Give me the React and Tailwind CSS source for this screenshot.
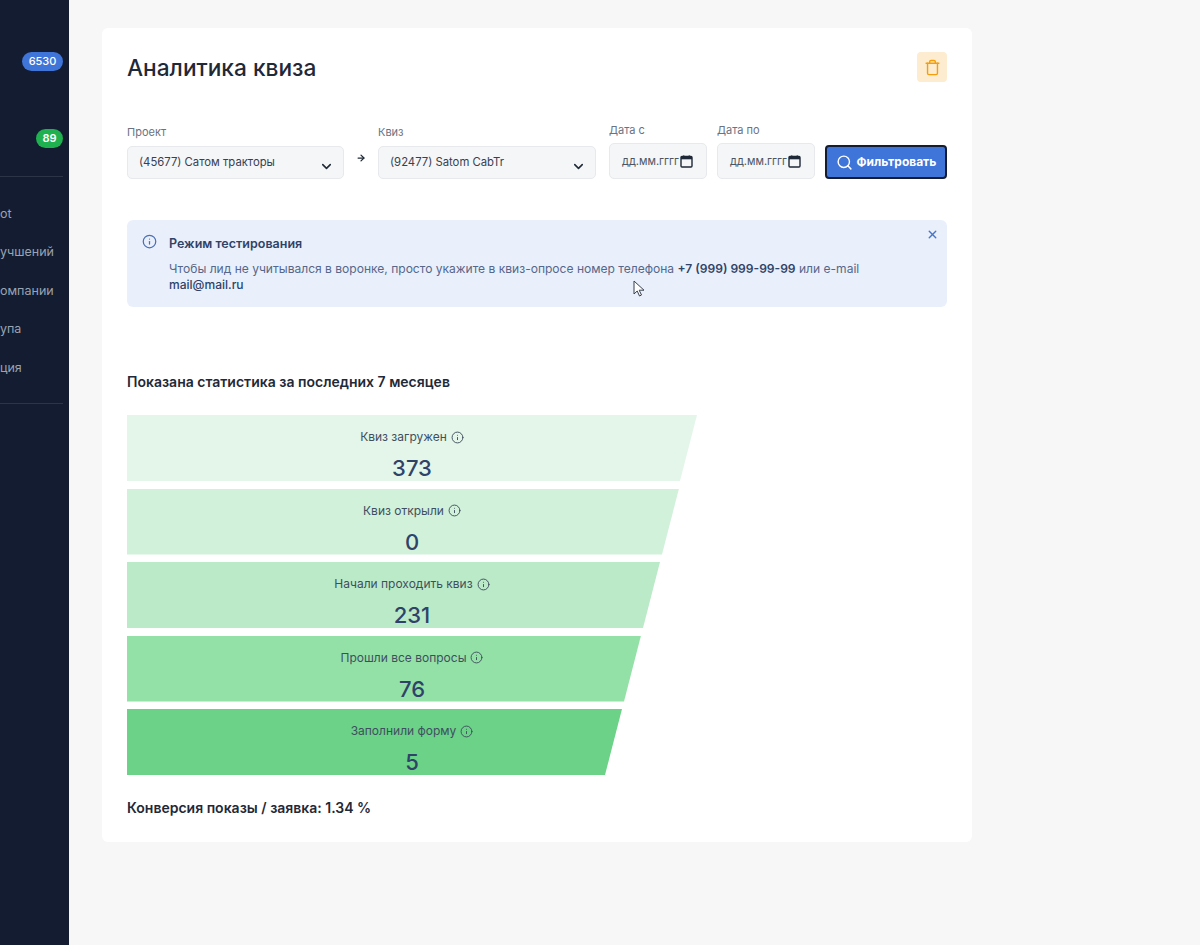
import React from 'react';
import { ChevronDown, ArrowRight, Search, X, Info, Trash } from 'lucide-react';

const funnel = [
  { label: 'Квиз загружен', value: '373', bg: 'bg-[#e4f6e9]', clip: '[clip-path:polygon(0_0,570px_0,553px_100%,0_100%)]' },
  { label: 'Квиз открыли', value: '0', bg: 'bg-[#d2f1da]', clip: '[clip-path:polygon(0_0,552px_0,535px_100%,0_100%)]' },
  { label: 'Начали проходить квиз', value: '231', bg: 'bg-[#bbeac8]', clip: '[clip-path:polygon(0_0,533px_0,516px_100%,0_100%)]' },
  { label: 'Прошли все вопросы', value: '76', bg: 'bg-[#94e1a8]', clip: '[clip-path:polygon(0_0,514px_0,497px_100%,0_100%)]' },
  { label: 'Заполнили форму', value: '5', bg: 'bg-[#6bd288]', clip: '[clip-path:polygon(0_0,495px_0,478px_100%,0_100%)]' },
];

const Sidebar = () => (
  <aside className="w-[69px] shrink-0 min-h-[945px] bg-[#131c31] overflow-hidden text-[12.5px] text-[#9aa3b2]">
    <div className="flex justify-end pt-[52px] pr-[6px]">
      <span className="h-[19px] w-[41px] rounded-full bg-[#3f74d8] text-white text-[11px] font-medium leading-[19px] text-center">6530</span>
    </div>
    <div className="flex justify-end pt-[58px] pr-[6px]">
      <span className="h-[19px] w-[27px] rounded-full bg-[#1fb14f] text-white text-[11px] font-semibold leading-[19px] text-center">89</span>
    </div>
    <div className="mt-[28px] mr-[6px] border-t border-[#2c3548]" />
    <div className="pt-[18px] leading-[38.4px]">
      <div>ot</div>
      <div>учшений</div>
      <div>омпании</div>
      <div>упа</div>
      <div>ция</div>
    </div>
    <div className="mt-[16px] mr-[6px] border-t border-[#2c3548]" />
  </aside>
);

const SelectBox = ({ label, value, width }) => (
  <div className={width}>
    <div className="text-[11px] leading-[14px] text-[#6b7280] mb-[7px]">{label}</div>
    <div className="h-[33px] pl-[11px] pr-[9px] flex items-center justify-between bg-[#f5f6f7] border border-[#e7e9ec] rounded-[5px] text-[11.3px] text-[#374151]">
      <span>{value}</span>
      <ChevronDown size={15} strokeWidth={2.5} className="mt-[7px] text-[#1f2937]" />
    </div>
  </div>
);

// calendar glyph of a native date input: thick top bar, thin frame
const CalendarGlyph = () => (
  <svg width="13" height="13" viewBox="0 0 13 13" className="text-[#1f2937] shrink-0">
    <rect x="1" y="1.5" width="11" height="10.5" rx="1" fill="none" stroke="currentColor" strokeWidth="1.4" />
    <rect x="1" y="1.5" width="11" height="2.8" fill="currentColor" />
    <rect x="3" y="0.5" width="1.4" height="2" fill="currentColor" />
    <rect x="8.6" y="0.5" width="1.4" height="2" fill="currentColor" />
  </svg>
);

const DateBox = ({ label }) => (
  <div className="w-[98px]">
    <div className="text-[11px] leading-[14px] text-[#6b7280] mb-[6px]">{label}</div>
    <div className="h-[36px] pl-[12px] pr-[13px] flex items-center justify-between bg-[#f5f6f7] border border-[#e7e9ec] rounded-[5px] text-[11px] text-[#4b5563]">
      <span>дд.мм.гггг</span>
      <CalendarGlyph />
    </div>
  </div>
);

const App = () => {
  return (
    <div className="flex min-h-[945px] bg-[#f7f7f7] font-['Inter',sans-serif]">
      <Sidebar />
      <main className="pl-[33px] pt-[28px]">
        <div className="w-[870px] h-[814px] bg-white rounded-[6px] px-[25px] pt-[24px]">
          <div className="flex items-center justify-between h-[30px]">
            <h1 className="text-[22.7px] font-medium text-[#1f2937] pt-[2px]">Аналитика квиза</h1>
            <button className="w-[30px] h-[30px] rounded-[4px] bg-[#fdecd0] flex items-center justify-center">
              <Trash size={17} strokeWidth={2} className="text-[#f59e0b]" />
            </button>
          </div>

          <div className="flex items-end mt-[41px]">
            <SelectBox label="Проект" value="(45677) Сатом тракторы" width="w-[217px]" />
            <div className="w-[34px] h-[33px] flex justify-center pt-[7px]">
              <ArrowRight size={10} strokeWidth={3} className="text-[#1f2937]" />
            </div>
            <SelectBox label="Квиз" value="(92477) Satom CabTr" width="w-[218px]" />
            <div className="flex gap-[10px] ml-[13px]">
              <DateBox label="Дата с" />
              <DateBox label="Дата по" />
            </div>
            <button className="ml-[10px] w-[122px] h-[34px] rounded-[4px] bg-[#3f74d8] border-2 border-[#131c31] text-white text-[12px] font-bold flex items-center justify-center gap-[4px]">
              <Search size={17} strokeWidth={2} />
              Фильтровать
            </button>
          </div>

          <div className="relative mt-[41px] h-[87px] bg-[#eaf0fb] rounded-[6px] pl-[42px] pr-[60px] pt-[16px]">
            <Info size={15} strokeWidth={2} className="absolute left-[15px] top-[14px] text-[#4a6fb5]" />
            <X size={13} strokeWidth={2.5} className="absolute right-[8px] top-[8px] text-[#4a74c4]" />
            <div className="text-[12.5px] leading-[16px] font-semibold text-[#2f4368]">Режим тестирования</div>
            <p className="mt-[9px] text-[12.05px] leading-[16px] text-[#55678a]">
              Чтобы лид не учитывался в воронке, просто укажите в квиз-опросе номер телефона{' '}
              <b className="font-semibold text-[#2f4368]">+7 (999) 999-99-99</b> или e-mail{' '}
              <b className="font-medium text-[#2f4368]">mail@mail.ru</b>
            </p>
            <svg width="12" height="17" viewBox="0 0 12 17" className="absolute left-[506px] top-[60px]">
              <path d="M1 1v13l3.2-3 2.3 5 2-1-2.3-4.8H11z" fill="#fff" stroke="#374151" strokeWidth="1" strokeLinejoin="round" />
            </svg>
          </div>

          <h2 className="mt-[66px] text-[14px] leading-[17px] font-semibold text-[#1f2937]">Показана статистика за последних 7 месяцев</h2>

          <div className="mt-[25px] flex flex-col gap-[7.5px]">
            {funnel.map((row) => (
              <div key={row.label} className={`w-[570px] h-[66px] ${row.bg} ${row.clip} flex flex-col items-center pt-[14px]`}>
                <div className="flex items-center gap-[4px] text-[12px] leading-[16px] text-[#3f4f5f]">
                  {row.label}
                  <Info size={13} strokeWidth={1.75} />
                </div>
                <div className="mt-[9px] text-[22px] leading-[28px] font-medium text-[#2f4368]">{row.value}</div>
              </div>
            ))}
          </div>

          <p className="mt-[24px] text-[14px] leading-[17px] font-semibold text-[#1f2937]">Конверсия показы / заявка: 1.34 %</p>
        </div>
      </main>
    </div>
  );
};

export default App;
